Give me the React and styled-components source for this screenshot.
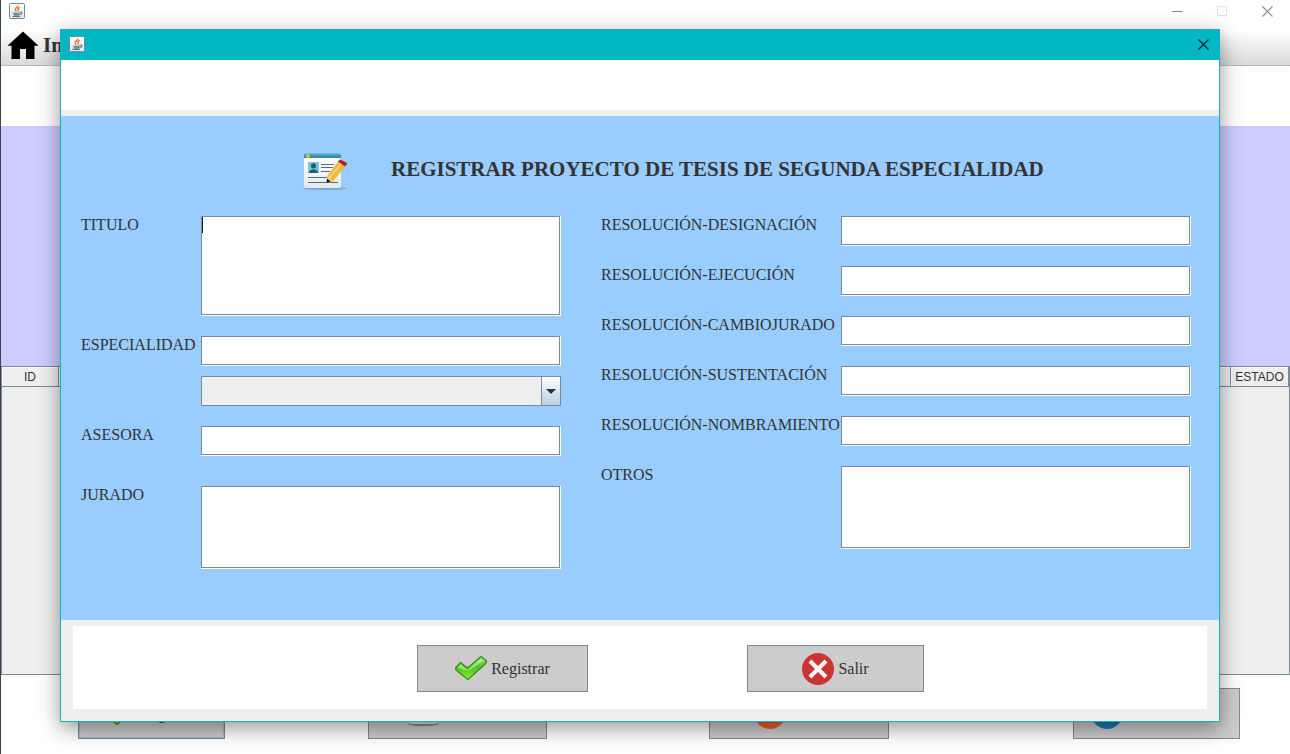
import React from "react";
import styled, { createGlobalStyle } from "styled-components";

const LINE = "#7a8a99";
const SERIF = '"Liberation Serif", "Times New Roman", serif';

const GlobalStyle = createGlobalStyle`
  *, *::before, *::after { box-sizing: border-box; }
  body {
    margin: 0;
    background: #fff;
    color: #333;
    font-family: ${SERIF};
    font-size: 16px;
  }
  button, input, textarea, select { font: inherit; color: inherit; border-radius: 0; }
`;

const Desktop = styled.div`
  position: relative;
  border-left: 1px solid #3b4150;
  background: #fff;
  overflow: hidden;
`;

const TitleBar = styled.header`
  display: flex;
  align-items: flex-start;
  justify-content: space-between;
  height: 30px;
  padding: 3px 0 0 8px;
`;

const WindowControls = styled.div`
  display: flex;
  margin-top: -3px;
`;

const ControlButton = styled.button`
  display: flex;
  align-items: center;
  justify-content: center;
  width: ${(p) => p.$width || 45}px;
  height: 23px;
  padding: 0;
  border: 0;
  background: transparent;
  color: ${(p) => p.$color || "#888"};
`;

const Toolbar = styled.nav`
  height: 36px;
  padding: 1px 6px;
  border-bottom: 1px solid #b8b8b8;
  background: linear-gradient(#fff, #d9d9d9);
`;

const HomeLink = styled.a`
  display: inline-flex;
  align-items: center;
  gap: 4px;
  color: #333;
  font-size: 21px;
  font-weight: bold;
  line-height: 28px;
  text-decoration: none;
`;

const Banner = styled.div`
  height: 300px;
  border-top: 60px solid #fff;
  background: #ccccff;
`;

const TablePane = styled.div`
  height: 309px;
  border: 1px solid ${LINE};
  background: #eee;
`;

const DataTable = styled.table`
  width: 100%;
  table-layout: fixed;
  border-collapse: separate;
  border-spacing: 0;
  font-family: "Liberation Sans", Arial, sans-serif;
  font-size: 12px;

  th {
    height: 20px;
    padding: 0;
    border-right: 1px solid ${LINE};
    border-bottom: 1px solid ${LINE};
    box-shadow: inset 1px 1px #fff;
    font-weight: normal;
    text-align: center;
  }
`;

const ActionBar = styled.footer`
  display: grid;
  grid-template-columns: 147px 143fr 179px 162fr 180px 184fr 167px;
  padding: 13px 50px 15px 77px;
`;

const PushButton = styled.button`
  display: flex;
  align-items: center;
  justify-content: ${(p) => (p.$indent ? "flex-start" : "center")};
  gap: 4px;
  width: ${(p) => (p.$width ? `${p.$width}px` : "auto")};
  height: ${(p) => p.$height || 51}px;
  padding: 0 0 0 ${(p) => p.$indent || 0}px;
  grid-column: ${(p) => p.$column || "auto"};
  border: 1px solid ${LINE};
  background: #cccccc;
  box-shadow: ${(p) => (p.$active ? "inset 0 0 0 1px #a3b8cc" : "none")};
`;

const Dialog = styled.section`
  position: absolute;
  top: 29px;
  left: 59px;
  right: 70px;
  border: 1px solid #18b0bb;
  background: #eee;
  box-shadow: 0 6px 20px rgba(0, 0, 0, 0.42);
`;

const DialogTitleBar = styled.header`
  display: flex;
  align-items: center;
  justify-content: space-between;
  height: 30px;
  padding: 0 0 2px 8px;
  background: #00b7c3;
`;

const BlankStrip = styled.div`
  height: 50px;
  margin-bottom: 6px;
  background: #fff;
`;

const FormPanel = styled.form`
  background: #99ccff;
`;

const FormHeader = styled.div`
  display: flex;
  align-items: flex-start;
  gap: 42px;
  padding: 32px 0 24px 242px;
`;

const FormTitle = styled.h1`
  margin: 0;
  font-size: 21px;
  line-height: 42px;
  white-space: nowrap;
`;

const Columns = styled.div`
  display: grid;
  grid-template-columns: minmax(0, 480fr) minmax(0, 590fr);
  gap: 40px;
  padding: 0 28px 51px 20px;
`;

const Column = styled.div`
  display: flex;
  flex-direction: column;
`;

const FieldRow = styled.div`
  display: grid;
  grid-template-columns: ${(p) => p.$label}px minmax(0, 1fr);
  align-items: start;
  margin-top: ${(p) => p.$gap || 0}px;
`;

const FieldLabel = styled.label`
  line-height: 18px;
  white-space: nowrap;
`;

const FieldStack = styled.div`
  display: grid;
  gap: 10px;
`;

const TextInput = styled.input`
  display: block;
  width: 100%;
  height: 30px;
  padding: 0 4px;
  border: 0 solid #fff;
  border-width: 0 1px 1px 0;
  outline: 0;
  background: #fff;
  box-shadow: inset 0 0 0 1px ${LINE};
`;

const TextArea = styled(TextInput).attrs({ as: "textarea" })`
  height: ${(p) => p.$height}px;
  padding: 2px 4px;
  resize: none;
  ${(p) =>
    p.$caret &&
    "background: linear-gradient(#222, #222) 1px 1px / 1px 16px no-repeat #fff;"}
`;

const SelectBox = styled.div`
  position: relative;
  height: 30px;
`;

const Select = styled.select`
  appearance: none;
  width: 100%;
  height: 30px;
  padding: 0 24px 0 4px;
  border: 1px solid ${LINE};
  background: #eee;
`;

const SelectArrow = styled.span`
  position: absolute;
  top: 1px;
  right: 1px;
  bottom: 1px;
  display: flex;
  align-items: center;
  justify-content: center;
  width: 19px;
  border-left: 1px solid ${LINE};
  background: linear-gradient(#fff, #b8cfe5);
  pointer-events: none;
`;

const DialogActions = styled.div`
  display: flex;
  justify-content: center;
  gap: 159px;
  margin: 6px 12px 12px;
  padding: 19px 0 17px 61px;
  background: #fff;
`;

function JavaIcon() {
  return (
    <svg width="16" height="16" viewBox="0 0 16 16" aria-hidden="true">
      <defs>
        <linearGradient id="tile" x1="0" y1="0" x2="0" y2="1">
          <stop offset="0" stopColor="#fff" />
          <stop offset="1" stopColor="#dfe6ea" />
        </linearGradient>
      </defs>
      <rect x=".5" y=".5" width="15" height="15" rx="1" fill="url(#tile)" stroke="#71899e" />
      <path d="M8.800 2.500c.5 2-3.500 2.300-2.500 4.500l1 1.600M10.800 4.500c-2 .8-2.600 1.600-1.600 2.700.3.5 0 1-.4 1.400" fill="none" stroke="#e07a2a" strokeWidth="1.400" />
      <path d="M4 9.700c1.600.7 5 .7 7 0M4.800 11.400c1.500.6 4 .6 5.600 0M11.200 9.300c2.600-.6 2.400 1.800-.4 2.300M3.400 13.300h7.600" fill="none" stroke="#54758f" strokeWidth="1.200" />
    </svg>
  );
}

function HomeIcon() {
  return (
    <svg width="32" height="28" viewBox="0 0 32 28" aria-hidden="true">
      <path d="M16 .5 31.500 14.800H27.500V28H19V18H13V28H4.500V14.800H.5Z" fill="#000" />
    </svg>
  );
}

function CrossIcon() {
  return (
    <svg width="11" height="11" viewBox="0 0 11 11" aria-hidden="true">
      <path d="m.5.5 10 10m0-10-10 10" stroke="currentColor" strokeWidth="1.1" />
    </svg>
  );
}

function FormIcon() {
  return (
    <svg width="46" height="44" viewBox="0 0 46 44" aria-hidden="true">
      <defs>
        <linearGradient id="bar" x1="0" y1="0" x2="0" y2="1">
          <stop offset="0" stopColor="#59aeca" />
          <stop offset="1" stopColor="#2f7f9f" />
        </linearGradient>
        <linearGradient id="sheet" x1="0" y1="0" x2="0" y2="1">
          <stop offset="0" stopColor="#fff" />
          <stop offset="1" stopColor="#e4e9ee" />
        </linearGradient>
      </defs>
      <ellipse cx="22" cy="40.500" rx="22" ry="1.500" fill="#5f86a8" opacity=".55" />
      <path d="M1 10h37v28a2 2 0 0 1-2 2H3a2 2 0 0 1-2-2Z" fill="url(#sheet)" />
      <path d="M1 10V7.500a2 2 0 0 1 2-2h33a2 2 0 0 1 2 2V10Z" fill="url(#bar)" />
      <circle cx="5" cy="8" r="2" fill="#e3c52e" />
      <rect x="5" y="14" width="11" height="11" fill="#7fc2da" />
      <circle cx="10.500" cy="17.800" r="2.600" fill="#1e5c80" />
      <path d="M6 25c0-5 9-5 9 0Z" fill="#1e5c80" />
      <path d="M18 16.500h13M18 19.500h12M18 23.500h9M5 29.500h21M5 34.500h30" stroke="#536f86" strokeWidth="1" />
      <path d="m35 13.500 7 5-12.500 15.500-6 .5.500-6Z" fill="#f5b933" />
      <path d="m38 16-12 14.500" stroke="#ffdc7d" strokeWidth="1.500" />
      <path d="m35 13.500 2-2.200 7.500 4-2.500 3.200Z" fill="#b3202c" />
      <path d="m24.500 28.500 5 4.500-6 1.500Z" fill="#f2d9ae" />
      <path d="m24.200 30.500 3.400 3-4.100 1.500Z" fill="#111" />
    </svg>
  );
}

function CheckIcon() {
  return (
    <svg width="32" height="32" viewBox="0 0 32 32" aria-hidden="true">
      <defs>
        <linearGradient id="leaf" x1="0" y1="0" x2="0" y2="1">
          <stop offset="0" stopColor="#8be36c" />
          <stop offset=".5" stopColor="#4fc51f" />
          <stop offset="1" stopColor="#8cf02c" />
        </linearGradient>
      </defs>
      <path d="M.8 14.500 5.500 9.500 12.500 15 26 3.500 31.300 7.500V10L13 26.500.8 17Z" fill="url(#leaf)" stroke="#3b8a22" strokeWidth="1.200" strokeLinejoin="round" />
      <path d="m2.500 14.500 3-3 7 5.500L26 5.500l3.200 2.300c-5 1.200-9 7.200-15 9.200-4 1-8-1.500-11.700-2.500Z" fill="#dcffd0" opacity=".5" />
    </svg>
  );
}

function ExitIcon() {
  return (
    <svg width="32" height="32" viewBox="0 0 32 32" aria-hidden="true">
      <circle cx="16" cy="16" r="16" fill="#cc3333" />
      <path d="m8 8 16 16m0-16-16 16" stroke="#fff" strokeWidth="4" />
    </svg>
  );
}

function DiscIcon({ color }) {
  return (
    <svg width="32" height="32" viewBox="0 0 32 32" aria-hidden="true">
      <circle cx="16" cy="15" r="16" fill={color} />
    </svg>
  );
}

function PaperIcon() {
  return (
    <svg width="32" height="32" viewBox="0 0 32 32" aria-hidden="true">
      <ellipse cx="16" cy="26" rx="15" ry="2" fill="#888" />
      <rect x="2" y="3" width="28" height="23" rx="2" fill="#ddd" />
    </svg>
  );
}

function Field({ id, text, label, gap, area, caret }) {
  return (
    <FieldRow $label={label} $gap={gap}>
      <FieldLabel htmlFor={id}>{text}</FieldLabel>
      {area ? <TextArea id={id} $height={area} $caret={caret} /> : <TextInput id={id} type="text" />}
    </FieldRow>
  );
}

const RESOLUTIONS = [
  ["designacion", "RESOLUCIÓN-DESIGNACIÓN"],
  ["ejecucion", "RESOLUCIÓN-EJECUCIÓN"],
  ["cambiojurado", "RESOLUCIÓN-CAMBIOJURADO"],
  ["sustentacion", "RESOLUCIÓN-SUSTENTACIÓN"],
  ["nombramiento", "RESOLUCIÓN-NOMBRAMIENTO"],
];

export default function App() {
  return (
    <>
      <GlobalStyle />
      <Desktop>
        <TitleBar>
          <JavaIcon />
          <WindowControls>
            <ControlButton aria-label="Minimizar">
              <svg width="11" height="11" aria-hidden="true">
                <path d="M0 5.500h10" stroke="currentColor" />
              </svg>
            </ControlButton>
            <ControlButton aria-label="Maximizar" $color="#e2e2e2">
              <svg width="11" height="11" aria-hidden="true">
                <path d="M.5.5h9v9h-9Z" fill="none" stroke="currentColor" />
              </svg>
            </ControlButton>
            <ControlButton aria-label="Cerrar">
              <CrossIcon />
            </ControlButton>
          </WindowControls>
        </TitleBar>
        <Toolbar>
          <HomeLink href="#inicio">
            <HomeIcon />
            Inicio
          </HomeLink>
        </Toolbar>
        <Banner />
        <TablePane>
          <DataTable>
            <colgroup>
              <col style={{ width: 57 }} />
              <col />
              <col style={{ width: 58 }} />
            </colgroup>
            <thead>
              <tr>
                <th scope="col">ID</th>
                <th />
                <th scope="col">ESTADO</th>
              </tr>
            </thead>
          </DataTable>
        </TablePane>
        <ActionBar>
          <PushButton $column={1} $active>
            <CheckIcon />
            Registrar
          </PushButton>
          <PushButton $column={3} $indent={38} aria-label="Editar">
            <PaperIcon />
          </PushButton>
          <PushButton $column={5} $indent={44} aria-label="Eliminar">
            <DiscIcon color="#e8622c" />
          </PushButton>
          <PushButton $column={7} $indent={17} aria-label="Actualizar">
            <DiscIcon color="#1f78b4" />
          </PushButton>
        </ActionBar>

        <Dialog role="dialog" aria-labelledby="dialog-title">
          <DialogTitleBar>
            <JavaIcon />
            <ControlButton $width={31} $color="#111" aria-label="Cerrar">
              <CrossIcon />
            </ControlButton>
          </DialogTitleBar>
          <BlankStrip />
          <FormPanel id="registro">
            <FormHeader>
              <FormIcon />
              <FormTitle id="dialog-title">REGISTRAR PROYECTO DE TESIS DE SEGUNDA ESPECIALIDAD</FormTitle>
            </FormHeader>
            <Columns>
              <Column>
                <Field id="titulo" text="TITULO" label={120} area={100} caret />
                <FieldRow $label={120} $gap={20}>
                  <FieldLabel htmlFor="especialidad">ESPECIALIDAD</FieldLabel>
                  <FieldStack>
                    <TextInput id="especialidad" type="text" />
                    <SelectBox>
                      <Select aria-label="ESPECIALIDAD" defaultValue="">
                        <option value="" />
                      </Select>
                      <SelectArrow>
                        <svg width="10" height="5" aria-hidden="true">
                          <path d="M0 0h10L5 5Z" fill="#333" />
                        </svg>
                      </SelectArrow>
                    </SelectBox>
                  </FieldStack>
                </FieldRow>
                <Field id="asesora" text="ASESORA" label={120} gap={20} />
                <Field id="jurado" text="JURADO" label={120} gap={30} area={83} />
              </Column>
              <Column>
                {RESOLUTIONS.map(([id, text], i) => (
                  <Field key={id} id={id} text={text} label={240} gap={i ? 20 : 0} />
                ))}
                <Field id="otros" text="OTROS" label={240} gap={20} area={83} />
              </Column>
            </Columns>
          </FormPanel>
          <DialogActions>
            <PushButton type="submit" form="registro" $width={171} $height={47}>
              <CheckIcon />
              Registrar
            </PushButton>
            <PushButton type="button" $width={177} $height={47}>
              <ExitIcon />
              Salir
            </PushButton>
          </DialogActions>
        </Dialog>
      </Desktop>
    </>
  );
}
